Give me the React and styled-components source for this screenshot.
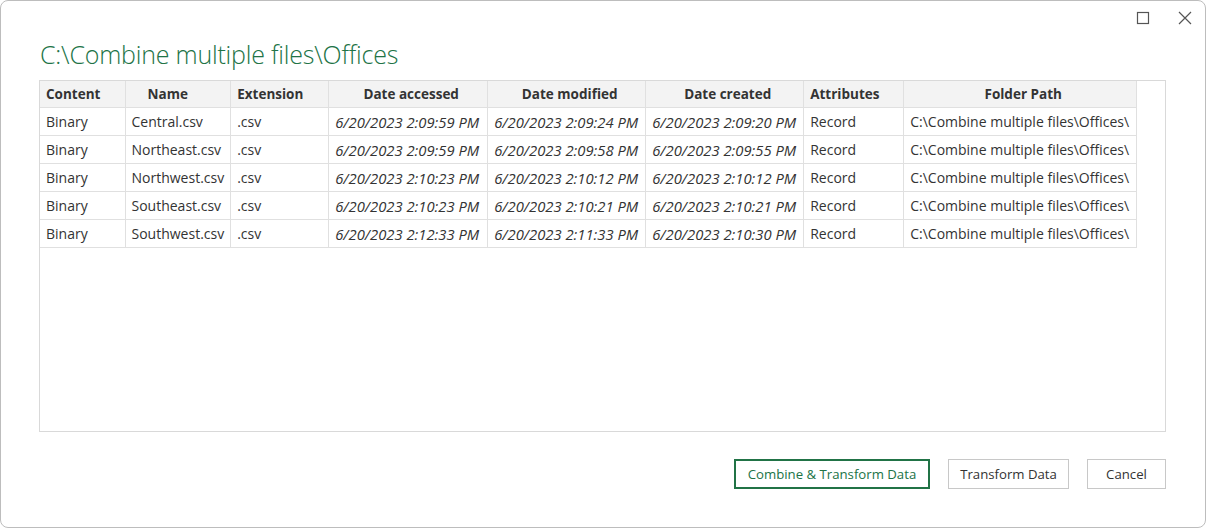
import React from "react";
import styled, { createGlobalStyle } from "styled-components";

const GlobalStyle = createGlobalStyle`
  html, body {
    margin: 0;
    padding: 0;
    background: #ffffff;
  }
  body {
    font-family: "Open Sans", "Noto Sans", sans-serif;
  }
`;

const Window = styled.div`
  box-sizing: border-box;
  width: 1206px;
  height: 528px;
  border: 1px solid #bdbdbd;
  border-radius: 8px;
  background: #fff;
  display: flex;
  flex-direction: column;
  padding: 0 39px 0 38px;
`;

const TitleBar = styled.div`
  display: flex;
  justify-content: flex-end;
  align-items: center;
  height: 34px;
  margin-right: -39px;
  padding-right: 12px;
  gap: 26px;
`;

const WinButton = styled.button`
  border: none;
  background: transparent;
  padding: 0;
  width: 16px;
  height: 16px;
  display: flex;
  align-items: center;
  justify-content: center;
  color: #555;
`;

const Title = styled.h1`
  margin: 2px 0 0 1px;
  font-weight: 300;
  font-size: 25px;
  line-height: 34px;
  color: #217346;
  letter-spacing: -0.2px;
  height: 43px;
`;

const Frame = styled.div`
  border: 1px solid #d9d9d9;
  height: 352px;
  box-sizing: border-box;
  overflow: hidden;
`;

const Table = styled.table`
  border-collapse: collapse;
  font-size: 14px;
  color: #333;
  table-layout: fixed;
`;

const HeadCell = styled.th`
  background: #f3f3f3;
  font-weight: 700;
  font-size: 13.5px;
  height: 26px;
  padding: 0 0 0 ${(p) => p.$pad || 6}px;
  text-align: ${(p) => p.$align || "left"};
  border: 1px solid #e0e0e0;
  border-top: none;
  white-space: nowrap;
  color: #333;
  &:first-child {
    border-left: none;
  }
`;

const Cell = styled.td`
  height: 27px;
  padding: 0 6px;
  border: 1px solid #e0e0e0;
  white-space: nowrap;
  overflow: hidden;
  font-style: ${(p) => (p.$italic ? "italic" : "normal")};
  font-size: ${(p) => (p.$italic ? "14.8px" : "14px")};
  &:first-child {
    border-left: none;
  }
`;

const Footer = styled.div`
  display: flex;
  justify-content: flex-end;
  gap: 18px;
  margin-top: 27px;
`;

const Button = styled.button`
  font-family: "Open Sans", "Noto Sans", sans-serif;
  font-size: 13.2px;
  height: 30px;
  width: ${(p) => p.$width}px;
  padding: 0;
  background: #fff;
  border: 1px solid ${(p) => (p.$primary ? "#217346" : "#c8c8c8")};
  color: ${(p) => (p.$primary ? "#217346" : "#333")};
  box-shadow: ${(p) => (p.$primary ? "inset 0 0 0 1px #217346" : "none")};
  cursor: pointer;
`;

const columns = [
  { key: "content", label: "Content", width: 85 },
  { key: "name", label: "Name", width: 103, pad: 22 },
  { key: "ext", label: "Extension", width: 98 },
  { key: "accessed", label: "Date accessed", width: 159, align: "center", italic: true },
  { key: "modified", label: "Date modified", width: 158, align: "center", italic: true },
  { key: "created", label: "Date created", width: 158, align: "center", italic: true },
  { key: "attr", label: "Attributes", width: 100 },
  { key: "path", label: "Folder Path", width: 233, align: "center" },
];

const path = "C:\\Combine multiple files\\Offices\\";

const rows = [
  ["Central.csv", "6/20/2023 2:09:59 PM", "6/20/2023 2:09:24 PM", "6/20/2023 2:09:20 PM"],
  ["Northeast.csv", "6/20/2023 2:09:59 PM", "6/20/2023 2:09:58 PM", "6/20/2023 2:09:55 PM"],
  ["Northwest.csv", "6/20/2023 2:10:23 PM", "6/20/2023 2:10:12 PM", "6/20/2023 2:10:12 PM"],
  ["Southeast.csv", "6/20/2023 2:10:23 PM", "6/20/2023 2:10:21 PM", "6/20/2023 2:10:21 PM"],
  ["Southwest.csv", "6/20/2023 2:12:33 PM", "6/20/2023 2:11:33 PM", "6/20/2023 2:10:30 PM"],
].map(([name, accessed, modified, created]) => ({
  content: "Binary",
  name,
  ext: ".csv",
  accessed,
  modified,
  created,
  attr: "Record",
  path,
}));

export default function App() {
  return (
    <>
      <GlobalStyle />
      <Window>
        <TitleBar>
          <WinButton aria-label="Maximize">
            <svg width="14" height="14" viewBox="0 0 14 14">
              <rect x="1.5" y="1.5" width="11" height="11" fill="none" stroke="#555" strokeWidth="1.2" />
            </svg>
          </WinButton>
          <WinButton aria-label="Close">
            <svg width="14" height="14" viewBox="0 0 14 14">
              <path d="M1 1 L13 13 M13 1 L1 13" stroke="#555" strokeWidth="1.2" />
            </svg>
          </WinButton>
        </TitleBar>
        <Title>C:\Combine multiple files\Offices</Title>
        <Frame>
          <Table>
            <colgroup>
              {columns.map((c) => (
                <col key={c.key} style={{ width: c.width }} />
              ))}
            </colgroup>
            <thead>
              <tr>
                {columns.map((c) => (
                  <HeadCell key={c.key} $align={c.align} $pad={c.align ? 0 : c.pad}>
                    {c.label}
                  </HeadCell>
                ))}
              </tr>
            </thead>
            <tbody>
              {rows.map((r) => (
                <tr key={r.name}>
                  {columns.map((c) => (
                    <Cell key={c.key} $italic={c.italic}>
                      {r[c.key]}
                    </Cell>
                  ))}
                </tr>
              ))}
            </tbody>
          </Table>
        </Frame>
        <Footer>
          <Button $primary $width={196}>Combine &amp; Transform Data</Button>
          <Button $width={121}>Transform Data</Button>
          <Button $width={79}>Cancel</Button>
        </Footer>
      </Window>
    </>
  );
}
